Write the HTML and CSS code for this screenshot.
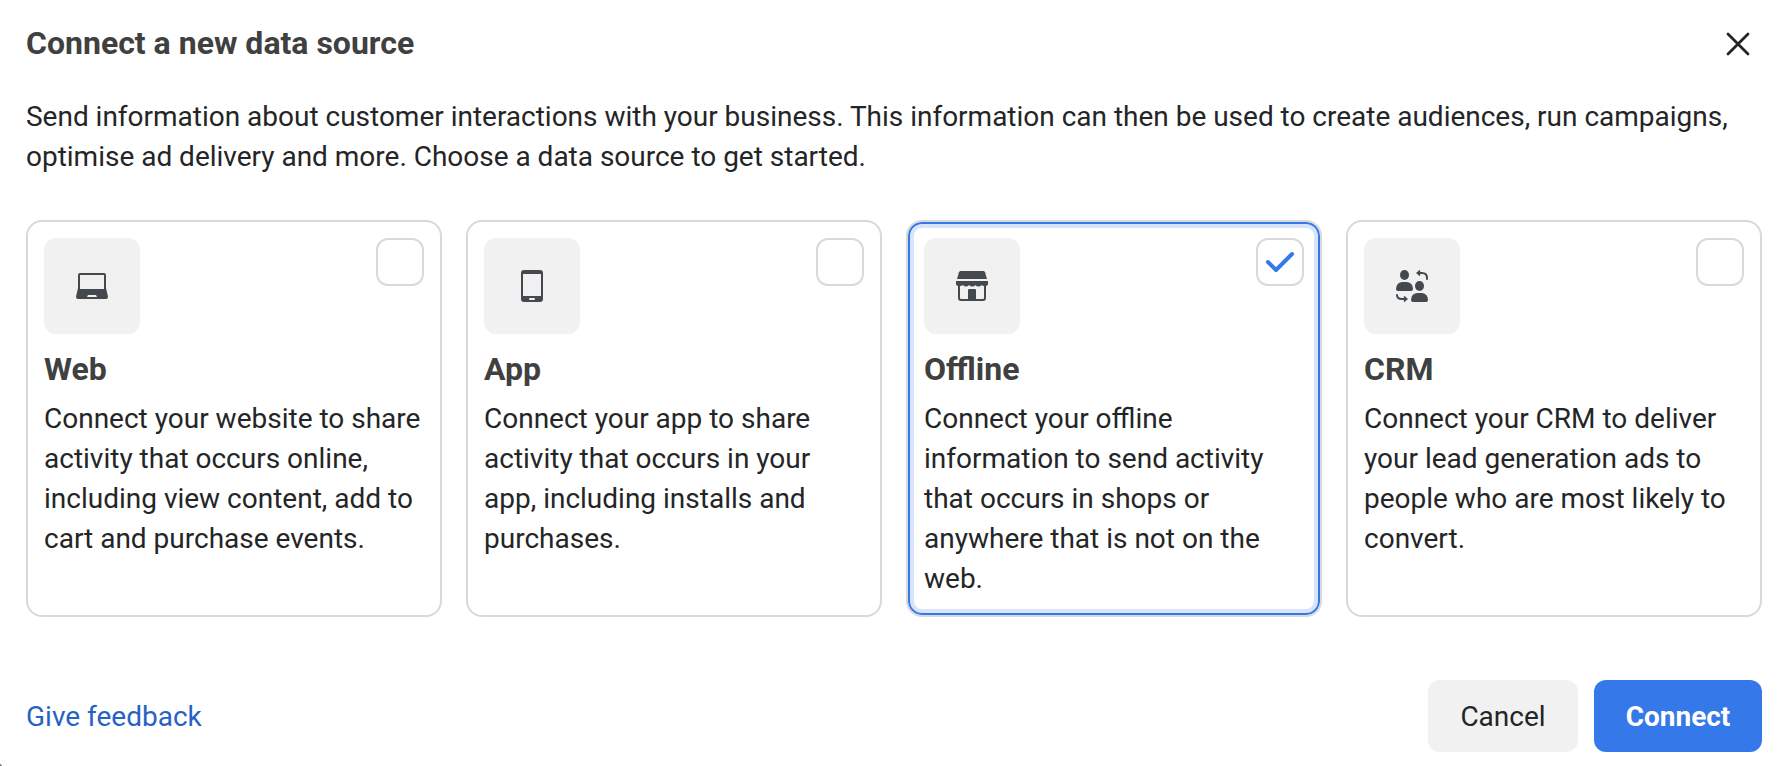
FILE: index.html
```html
<!DOCTYPE html>
<html lang="en">
<head>
<meta charset="utf-8">
<title>Connect a new data source</title>
<link rel="stylesheet" href="styles.css">
</head>
<body>
<main class="dialog">
  <header class="header">
    <h1 class="title">Connect a new data source</h1>
    <button class="close" aria-label="Close">
      <svg width="24" height="24" viewBox="0 0 24 24"><path d="M2 2L22 22M22 2L2 22" fill="none" stroke="#242526" stroke-width="2.8" stroke-linecap="round"/></svg>
    </button>
  </header>
  <p class="intro">Send information about customer interactions with your business. This information can then be used to create audiences, run campaigns, optimise ad delivery and more. Choose a data source to get started.</p>
  <section class="cards">
    <article class="card">
      <div class="card-top">
        <div class="tile">
          <svg class="icon" viewBox="0 0 32 32"><path fill-rule="evenodd" d="M4 3H28Q30 3 30 5V18L32 26.5Q32 29 30 29H2Q0 29 0 26.5L2 18V5Q2 3 4 3ZM4 5V19H28V5ZM12 25L11 27H21L20 25Z"/></svg>
        </div>
        <span class="check"></span>
      </div>
      <h2 class="card-title">Web</h2>
      <p class="card-text">Connect your website to share activity that occurs online, including view content, add to cart and purchase events.</p>
    </article>
    <article class="card">
      <div class="card-top">
        <div class="tile">
          <svg class="icon" viewBox="0 0 32 32"><path fill-rule="evenodd" d="M8 0H24Q27 0 27 3V29Q27 32 24 32H8Q5 32 5 29V3Q5 0 8 0ZM7 4V26H25V4ZM14 28Q13 28 13 29T14 30H18Q19 30 19 29T18 28Z"/></svg>
        </div>
        <span class="check"></span>
      </div>
      <h2 class="card-title">App</h2>
      <p class="card-text">Connect your app to share activity that occurs in your app, including installs and purchases.</p>
    </article>
    <article class="card card-selected">
      <div class="card-top">
        <div class="tile">
          <svg class="icon" viewBox="0 0 32 32"><path d="M5 1H27Q28.5 1 29 2.3L31 9H1L3 2.3Q3.5 1 5 1Z"/><path fill-rule="evenodd" d="M0 11H32V14Q32 15.5 30 16V28Q30 31 27 31H5Q2 31 2 28V16Q0 15.5 0 14ZM4 16V28Q4 29 5 29H12V20Q12 19 13 19H19Q20 19 20 20V29H27Q28 29 28 28V16Q26 16 25.5 15Q24.5 16.5 22.5 16.5Q20.500 16.500 19.500 15Q18.500 16.500 16.500 16.500Q14 16.500 13 15Q12 16.500 10 16.500Q8 16.500 7 15Q6 16 4 16Z"/></svg>
        </div>
        <span class="check">
          <svg width="48" height="48" viewBox="0 0 48 48"><path d="M12 24L20 32L36 16" fill="none" stroke="#3578e9" stroke-width="4" stroke-linecap="round" stroke-linejoin="round"/></svg>
        </span>
      </div>
      <h2 class="card-title">Offline</h2>
      <p class="card-text">Connect your offline information to send activity that occurs in shops or anywhere that is not on the web.</p>
    </article>
    <article class="card">
      <div class="card-top">
        <div class="tile">
          <svg class="icon" viewBox="0 0 32 32"><ellipse cx="8.500" cy="5" rx="4.500" ry="5"/><ellipse cx="23.500" cy="16" rx="4.500" ry="5"/><path d="M6 12H11Q17 13 17 19Q17 21 15 21H2Q0 21 0 19Q0 13 6 12Z"/><path d="M21 23H26Q32 24 32 30Q32 32 30 32H17Q15 32 15 30Q15 24 21 23Z"/><path d="M20 3L23.500 0Q24.200 0 24.200 1V2H26Q32 2 32 8V9Q32 10 31 10T30 9V8Q30 4 26 4H24.200V5Q24.200 6 23.500 6Z"/><path d="M12 29L8.500 32Q7.800 32 7.800 31V30H6Q0 30 0 25Q0 24 1 24T2 25Q2 28 6 28H7.800V27Q7.800 26 8.500 26Z"/></svg>
        </div>
        <span class="check"></span>
      </div>
      <h2 class="card-title">CRM</h2>
      <p class="card-text">Connect your CRM to deliver your lead generation ads to people who are most likely to convert.</p>
    </article>
  </section>
  <footer class="footer">
    <a class="feedback">Give feedback</a>
    <div class="actions">
      <button class="button button-cancel">Cancel</button>
      <button class="button button-connect">Connect</button>
    </div>
  </footer>
</main>
</body>
</html>
```
FILE: styles.css
```css
* { box-sizing: border-box; }
body {
  margin: 0;
  background: #fff;
  color: #242526;
  font: 28px/40px Roboto, sans-serif;
}
h1, h2, p { margin: 0; }
button { border: 0; padding: 0; font: inherit; }
.dialog {
  height: 766px;
  padding: 23px 24px 14px 26px;
  display: flex;
  flex-direction: column;
  background: radial-gradient(circle at 0 100%, #777 0 1.5px, transparent 2px);
}
.header {
  display: flex;
  justify-content: space-between;
  align-items: center;
  height: 40px;
  margin-bottom: 34px;
  padding-right: 12px;
}
.title, .card-title {
  font-size: 32px;
  line-height: 40px;
  font-weight: 700;
  color: #404040;
}
.close { display: flex; padding-top: 2px; background: none; }
.intro { height: 80px; margin-bottom: 43px; letter-spacing: -0.01px; }
.cards {
  display: grid;
  grid-template-columns: repeat(4, 416px);
  gap: 24px;
  height: 396px;
}
.card {
  padding: 16px;
  border: 2px solid #d9d9d9;
  border-radius: 16px;
}
.card-selected {
  box-shadow: inset 0 0 0 2px #3578e9, inset 0 0 0 6px #d7e4fb;
}
.card-top {
  display: flex;
  justify-content: space-between;
  margin-bottom: 15px;
}
.tile {
  width: 96px;
  height: 96px;
  display: flex;
  align-items: center;
  justify-content: center;
  border-radius: 12px;
  background: #f1f1f1;
}
.icon { width: 32px; height: 32px; fill: #444950; }
.check {
  width: 48px;
  height: 48px;
  display: flex;
  align-items: center;
  justify-content: center;
  border: 2px solid #d9d9d9;
  border-radius: 12px;
}
.check svg { flex: none; }
.card-text { margin-top: 10px; }
.footer {
  display: flex;
  justify-content: space-between;
  align-items: center;
  margin-top: auto;
}
.feedback { padding-top: 2px; color: #2861c5; }
.actions { display: flex; gap: 16px; }
.button { height: 72px; padding-top: 2px; border-radius: 12px; }
.button-cancel { width: 150px; background: #f1f1f1; color: #242526; }
.button-connect { width: 168px; background: #3578e9; color: #fff; font-weight: 700; }
```
